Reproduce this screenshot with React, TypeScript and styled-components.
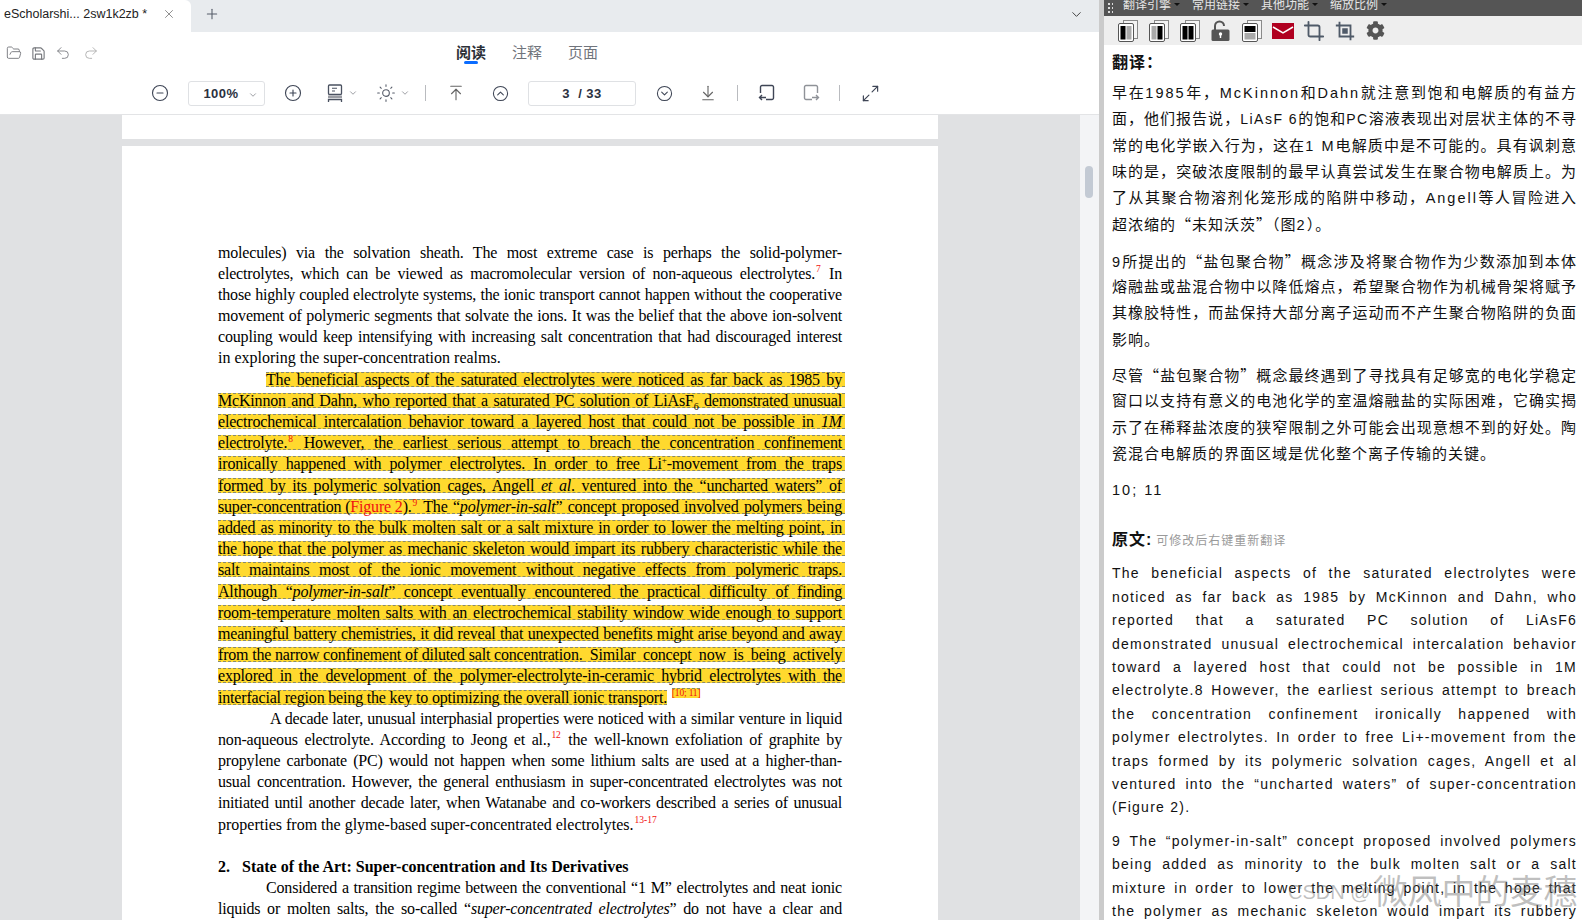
import React from 'react';
import styled, { createGlobalStyle } from 'styled-components';
import {
  ArrowDownToLine,
  ArrowUpToLine,
  ChevronDown,
  CircleChevronDown,
  CircleChevronUp,
  CircleMinus,
  CirclePlus,
  Crop,
  FolderOpen,
  Maximize2,
  Plus,
  Redo2,
  Save,
  Sun,
  Undo2,
  X,
} from 'lucide-react';
import { FaCog } from 'react-icons/fa';

const GlobalStyle = createGlobalStyle`
  html, body { margin: 0; padding: 0; height: 100%; overflow: hidden; background: #fff; }
  body { font-family: "Liberation Sans", "Noto Sans CJK SC", sans-serif; }
`;

const Shell = styled.div`
  display: flex;
  width: 1582px;
  height: 920px;
  overflow: hidden;
  position: relative;
`;

const Reader = styled.div`
  width: 1099px;
  flex: none;
  display: flex;
  flex-direction: column;
`;

const TabBar = styled.div`
  height: 32px;
  flex: none;
  display: flex;
  align-items: center;
  background: #e8ebee;
  color: #3c4350;
`;

const Tab = styled.div`
  width: 191px;
  height: 32px;
  box-sizing: border-box;
  padding: 0 15px 4px 4px;
  display: flex;
  align-items: center;
  justify-content: space-between;
  background: #fff;
  border-top-right-radius: 6px;
  font-size: 12.5px;
  color: #222;
  white-space: nowrap;
`;

const TabAdd = styled.div`
  display: flex;
  margin: -4px 0 0 13px;
  color: #555c68;
`;

const TabMenu = styled.div`
  display: flex;
  margin: -4px 15px 0 auto;
  color: #444;
`;

const ModeRow = styled.div`
  height: 38px;
  flex: none;
  box-sizing: border-box;
  display: flex;
  align-items: center;
  padding: 4px 0 0 6px;
  background: #fff;
`;

const FileTools = styled.div`
  display: flex;
  align-items: center;
  gap: 9px;
  width: 100px;
  color: #77797e;
`;

const RedoSlot = styled.div`
  display: flex;
  margin-left: 3px;
  color: #aaa;
`;

const ModeTabs = styled.div`
  display: flex;
  gap: 26px;
  margin-left: 350px;
`;

const ModeTab = styled.div<{ $active?: boolean }>`
  position: relative;
  font-size: 15px;
  line-height: 20px;
  color: ${(p) => (p.$active ? '#2c3038' : '#70747c')};
  font-weight: ${(p) => (p.$active ? 700 : 400)};

  &::after {
    content: '';
    display: ${(p) => (p.$active ? 'block' : 'none')};
    position: absolute;
    left: 8px;
    right: 8px;
    bottom: -1px;
    height: 3px;
    border-radius: 2px;
    background: #0a6cff;
  }
`;

const ToolRow = styled.div`
  height: 45px;
  flex: none;
  box-sizing: border-box;
  display: flex;
  align-items: center;
  padding: 2px 0 0 148px;
  background: #fff;
  border-bottom: 1px solid #e3e4e6;
`;

const ToolBtn = styled.div<{ $ml?: number; $w?: number; $dim?: boolean }>`
  display: flex;
  align-items: center;
  flex: none;
  width: ${(p) => p.$w ?? 24}px;
  margin-left: ${(p) => p.$ml ?? 0}px;
  justify-content: ${(p) => (p.$w ? 'flex-start' : 'center')};
  color: ${(p) => (p.$dim ? '#8f9298' : '#3f4656')};
`;

const Caret = styled(ChevronDown)`
  margin-left: 4px;
  color: #8a8d93;
`;

const ToolSep = styled.div<{ $ml: number }>`
  width: 1px;
  height: 16px;
  flex: none;
  margin-left: ${(p) => p.$ml}px;
  background: #b9bbbf;
`;

const FieldBox = styled.div<{ $w: number; $ml: number; $pr?: number }>`
  width: ${(p) => p.$w}px;
  height: 25px;
  flex: none;
  box-sizing: border-box;
  margin-left: ${(p) => p.$ml}px;
  padding-right: ${(p) => p.$pr ?? 0}px;
  display: flex;
  align-items: center;
  justify-content: center;
  position: relative;
  border: 1px solid #dfe1e4;
  border-radius: 3px;
  font-size: 13px;
  font-weight: 700;
  letter-spacing: 0.5px;
  color: #2b3140;
  white-space: pre;
`;

const FieldCaret = styled(ChevronDown)`
  position: absolute;
  right: 6px;
  top: 8px;
  color: #8a8d93;
`;

const Viewer = styled.div`
  flex: 1;
  min-height: 0;
  display: flex;
  overflow: hidden;
`;

const PageArea = styled.div`
  width: 1080px;
  flex: none;
  padding-left: 122px;
  box-sizing: border-box;
  background: #e0e1e3;
`;

const ScrollTrack = styled.div`
  flex: 1;
  padding: 51px 6px 0 5px;
  background: #f3f4f6;
`;

const ScrollThumb = styled.div`
  height: 32px;
  border-radius: 4px;
  background: #c3cad4;
`;

const PageTail = styled.div`
  width: 816px;
  height: 24px;
  margin-bottom: 7px;
  background: #fff;
`;

const PdfPage = styled.div`
  width: 816px;
  box-sizing: border-box;
  padding: 95.5px 0 0 96px;
  height: 800px;
  background: #fff;
  font-family: "Liberation Serif", "Times New Roman", serif;
  font-size: 16px;
  color: #000;
`;

const PdfLine = styled.div<{ $indent?: number; $last?: boolean; $bold?: boolean }>`
  width: 624px;
  height: 21.2px;
  line-height: 21.2px;
  box-sizing: border-box;
  padding-left: ${(p) => p.$indent ?? 0}px;
  white-space: nowrap;
  letter-spacing: ${(p) => (p.$last ? 0 : -0.18)}px;
  text-align: justify;
  text-align-last: ${(p) => (p.$last ? 'left' : 'justify')};
  font-weight: ${(p) => (p.$bold ? 700 : 400)};
`;

const MarkLine = styled.div<{ $indent?: number }>`
  width: 627px;
  height: 21.2px;
  box-sizing: border-box;
  padding-left: ${(p) => p.$indent ?? 0}px;
  display: flex;
  align-items: center;
  white-space: nowrap;
  letter-spacing: -0.18px;
`;

const Mark = styled.div<{ $fill?: boolean }>`
  flex: ${(p) => (p.$fill ? '1 1 0' : 'none')};
  min-width: 0;
  height: 15px;
  line-height: 13px;
  box-sizing: border-box;
  padding-right: ${(p) => (p.$fill ? 3 : 0)}px;
  background: #ffd92e;
  border-top: 1px dashed #8a8a6a;
  border-bottom: 1px dashed #8a8a6a;
  text-align: justify;
  text-align-last: justify;
`;

const Ref = styled.sup`
  font-size: 9.5px;
  line-height: 0;
  color: #f01010;
  margin: 0 1px;
`;

const RefMark = styled(Ref)`
  align-self: flex-start;
  height: 9px;
  line-height: 9px;
  margin-top: 2px;
  background: #ffd92e;
  border-top: 1px dashed #8a8a6a;
`;

const Plain = styled.sup`
  font-size: 9px;
  line-height: 0;
`;

const Figure = styled.span`
  color: #f01010;
`;

const Sub = styled.sub`
  font-size: 10px;
  line-height: 0;
`;

const BlankLine = styled.div`
  height: 21.2px;
`;

const Divider = styled.div`
  width: 5px;
  flex: none;
  background: #cbcbcb;
`;

const Translator = styled.div`
  flex: 1;
  min-width: 0;
  display: flex;
  flex-direction: column;
`;

const MenuBar = styled.div`
  height: 16px;
  flex: none;
  display: flex;
  background: #555;
  color: #e6e6e6;
  overflow: hidden;
`;

const Grip = styled.div`
  width: 6px;
  height: 12px;
  margin: 2px 10px 0 3px;
  flex: none;
  background-image: radial-gradient(#ddd 1px, transparent 1.2px);
  background-size: 4px 4px;
`;

const MenuItem = styled.div`
  width: 69px;
  flex: none;
  display: flex;
  align-items: flex-start;
  font-size: 12px;
  line-height: 10px;

  &::after {
    content: '';
    margin: 3px 0 0 3px;
    border: 3.5px solid transparent;
    border-top-color: #111;
    border-bottom: 0;
  }
`;

const IconBar = styled.div`
  height: 29px;
  flex: none;
  display: flex;
  align-items: center;
  padding-left: 8px;
  background: #eee;
`;

const IconSlot = styled.div`
  width: 31px;
  flex: none;
  display: flex;
  justify-content: center;
  color: #555;
`;

const CropIcon = styled(Crop)`
  color: #4f5a68;
`;

const Result = styled.div`
  padding: 5px 0 0 8px;
  width: 473px;
  box-sizing: border-box;
  color: #111;
  overflow: hidden;
`;

const Heading = styled.div<{ $top?: number }>`
  height: 26px;
  line-height: 26px;
  margin-top: ${(p) => p.$top ?? 0}px;
  font-size: 16px;
  font-weight: 700;
  letter-spacing: 1px;
  white-space: nowrap;
`;

const HeadingNote = styled.span`
  margin-left: 4px;
  font-size: 12px;
  font-weight: 400;
  letter-spacing: 1px;
  color: #9a9a9a;
`;

const Para = styled.div<{ $cn?: boolean; $top?: number }>`
  margin-top: ${(p) => p.$top ?? 10}px;
  font-size: ${(p) => (p.$cn ? 15 : 14)}px;
  letter-spacing: ${(p) => (p.$cn ? 1 : 1.25)}px;
  line-height: ${(p) => (p.$cn ? 26.3 : 23.4)}px;

  & > div {
    height: ${(p) => (p.$cn ? 26.3 : 23.4)}px;
    white-space: nowrap;
    text-align: justify;
    text-align-last: justify;
  }

  & > div:last-child {
    text-align-last: left;
  }
`;

const OpenPara = styled(Para)`
  & > div:last-child {
    text-align-last: justify;
  }
`;

// latin runs inside the chinese text sit tighter in size, wider in spacing
const Latin = styled.span<{ $tight?: boolean }>`
  font-size: ${(p) => (p.$tight ? 14 : 14.5)}px;
  letter-spacing: ${(p) => (p.$tight ? 1.5 : 2)}px;
`;

// the wide Chinese quotes and brackets come from the CJK face
const Cjk = styled.span`
  font-family: "Noto Sans CJK SC", sans-serif;
`;

const Watermark = styled.div`
  position: absolute;
  left: 1288px;
  top: 874px;
  display: flex;
  align-items: center;
  gap: 6px;
  line-height: 36px;
  white-space: nowrap;
  color: rgba(110, 110, 110, 0.44);
  pointer-events: none;
`;

const WatermarkLatin = styled.span`
  font-size: 20px;
`;

const WatermarkCjk = styled.span`
  font-size: 34px;
  margin-left: -3px;
`;

// small drawn icons for what the icon packages do not have
const PageLayoutIcon = () => (
  <svg width="18" height="18" viewBox="0 0 18 18" fill="none">
    <rect x="2.5" y="1" width="13" height="9.5" rx="1" stroke="#4a5160" strokeWidth="1.3" />
    <path d="M6 4.2h5M6 7h3" stroke="#4a5160" strokeWidth="1.1" />
    <rect x="2" y="11.5" width="14" height="2.5" fill="#9a9ca3" />
    <path d="M2.5 18v-2.5h13V18" stroke="#4a5160" strokeWidth="1.3" />
  </svg>
);

const RotateIcon = ({ flip }: { flip?: boolean }) => (
  <svg width="18" height="18" viewBox="0 0 18 18" fill="none" stroke="currentColor" strokeWidth="1.4">
    <g transform={flip ? 'translate(18 0) scale(-1 1)' : undefined}>
      <path d="M2.5 9V3a1.5 1.5 0 0 1 1.5-1.5h10A1.5 1.5 0 0 1 15.500 3v11a1.500 1.500 0 0 1-1.500 1.500H8" />
      <path d="M8 13.500H1.500M4 11l-2.500 2.500L4 16" />
    </g>
  </svg>
);

const PaneIcon = ({ left, right, stacked }: { left: string; right: string; stacked?: boolean }) => (
  <svg width="20" height="22" viewBox="0 0 20 22">
    <rect x="5.500" y="0.500" width="14" height="18" fill="#f4f4f4" stroke="#8a8a8a" />
    <rect x="0.500" y="3.500" width="15" height="18" rx="1.500" fill="#fff" stroke="#555" />
    {stacked ? (
      <>
        <rect x="2.500" y="6" width="11" height="6" fill={left} />
        <rect x="2.500" y="13" width="11" height="6.500" fill={right} />
      </>
    ) : (
      <>
        <rect x="2.500" y="6" width="5" height="13.500" fill={left} />
        <rect x="8.500" y="6" width="5" height="13.500" fill={right} />
      </>
    )}
  </svg>
);

const LockIcon = () => (
  <svg width="19" height="21" viewBox="0 0 19 21">
    <path d="M4 10V6a4.500 4.500 0 0 1 9 0" fill="none" stroke="#555" strokeWidth="2" />
    <rect x="0.500" y="9.500" width="18" height="11.500" rx="1.500" fill="#555" />
    <circle cx="9.500" cy="14" r="1.700" fill="#fff" />
    <rect x="8.800" y="14" width="1.400" height="4" fill="#fff" />
  </svg>
);

const MailIcon = () => (
  <svg width="22" height="16" viewBox="0 0 22 16">
    <rect width="22" height="16" fill="#b00020" />
    <path d="M1 4l10 6 10-6" fill="none" stroke="#fff" strokeWidth="1.500" />
  </svg>
);

const CropBoxIcon = () => (
  <svg width="22" height="22" viewBox="0 0 24 24" fill="none" stroke="#4f5a68" strokeWidth="2">
    <path d="M6 2v16h16M2 6h16v16" />
    <rect x="9" y="9" width="6" height="6" fill="#4f5a68" stroke="none" />
  </svg>
);

const App: React.FC = () => (
  <Shell>
    <GlobalStyle />
    <Reader>
      <TabBar>
        <Tab>
          eScholarshi... 2sw1k2zb *
          <X size={14} strokeWidth={1.4} color="#777" />
        </Tab>
        <TabAdd>
          <Plus size={16} strokeWidth={1.6} />
        </TabAdd>
        <TabMenu>
          <ChevronDown size={15} strokeWidth={1.6} />
        </TabMenu>
      </TabBar>
      <ModeRow>
        <FileTools>
          <FolderOpen size={16} strokeWidth={1.4} />
          <Save size={15} strokeWidth={1.8} />
          <Undo2 size={16} strokeWidth={1.3} />
          <RedoSlot>
            <Redo2 size={16} strokeWidth={1.3} />
          </RedoSlot>
        </FileTools>
        <ModeTabs>
          <ModeTab $active>阅读</ModeTab>
          <ModeTab>注释</ModeTab>
          <ModeTab>页面</ModeTab>
        </ModeTabs>
      </ModeRow>
      <ToolRow>
        <ToolBtn><CircleMinus size={18} strokeWidth={1.5} /></ToolBtn>
        <FieldBox $w={77} $ml={16} $pr={11}>
          100%
          <FieldCaret size={10} />
        </FieldBox>
        <ToolBtn $ml={16}><CirclePlus size={18} strokeWidth={1.5} /></ToolBtn>
        <ToolBtn $ml={21} $w={40}>
          <PageLayoutIcon />
          <Caret size={10} />
        </ToolBtn>
        <ToolBtn $ml={10} $w={40}>
          <Sun size={20} strokeWidth={1.3} color="#555b68" />
          <Caret size={10} />
        </ToolBtn>
        <ToolSep $ml={9} />
        <ToolBtn $ml={18} $dim><ArrowUpToLine size={18} strokeWidth={1.5} color="#666" /></ToolBtn>
        <ToolBtn $ml={20}><CircleChevronUp size={17} strokeWidth={1.5} /></ToolBtn>
        <FieldBox $w={108} $ml={16}>{'3  / 33'}</FieldBox>
        <ToolBtn $ml={16}><CircleChevronDown size={17} strokeWidth={1.5} /></ToolBtn>
        <ToolBtn $ml={20} $dim><ArrowDownToLine size={18} strokeWidth={1.5} color="#666" /></ToolBtn>
        <ToolSep $ml={17} />
        <ToolBtn $ml={17}><RotateIcon /></ToolBtn>
        <ToolBtn $ml={20} $dim><RotateIcon flip /></ToolBtn>
        <ToolSep $ml={16} />
        <ToolBtn $ml={18}><Maximize2 size={19} strokeWidth={1.5} /></ToolBtn>
      </ToolRow>
      <Viewer>
        <PageArea>
          <PageTail />
          <PdfPage>
            <PdfLine>molecules) via the solvation sheath. The most extreme case is perhaps the solid-polymer-</PdfLine>
            <PdfLine>electrolytes, which can be viewed as macromolecular version of non-aqueous electrolytes.<Ref>7</Ref> In</PdfLine>
            <PdfLine>those highly coupled electrolyte systems, the ionic transport cannot happen without the cooperative</PdfLine>
            <PdfLine>movement of polymeric segments that solvate the ions. It was the belief that the above ion-solvent</PdfLine>
            <PdfLine>coupling would keep intensifying with increasing salt concentration that had discouraged interest</PdfLine>
            <PdfLine $last>in exploring the super-concentration realms.</PdfLine>
            <MarkLine $indent={48}><Mark $fill>The beneficial aspects of the saturated electrolytes were noticed as far back as 1985 by</Mark></MarkLine>
            <MarkLine><Mark $fill>McKinnon and Dahn, who reported that a saturated PC solution of LiAsF<Sub>6</Sub> demonstrated unusual</Mark></MarkLine>
            <MarkLine><Mark $fill>electrochemical intercalation behavior toward a layered host that could not be possible in <i>1M</i></Mark></MarkLine>
            <MarkLine><Mark $fill>electrolyte.<Ref>8</Ref> However, the earliest serious attempt to breach the concentration confinement</Mark></MarkLine>
            <MarkLine><Mark $fill>ironically happened with polymer electrolytes. In order to free Li<Plain>+</Plain>-movement from the traps</Mark></MarkLine>
            <MarkLine><Mark $fill>formed by its polymeric solvation cages, Angell <i>et al</i>. ventured into the “uncharted waters” of</Mark></MarkLine>
            <MarkLine><Mark>super-concentration (<Figure>Figure 2</Figure>).</Mark><Mark $fill><Ref>9</Ref> The “<i>polymer-in-salt</i>” concept proposed involved polymers being</Mark></MarkLine>
            <MarkLine><Mark $fill>added as minority to the bulk molten salt or a salt mixture in order to lower the melting point, in</Mark></MarkLine>
            <MarkLine><Mark $fill>the hope that the polymer as mechanic skeleton would impart its rubbery characteristic while the</Mark></MarkLine>
            <MarkLine><Mark $fill>salt maintains most of the ionic movement without negative effects from polymeric traps.</Mark></MarkLine>
            <MarkLine><Mark $fill>Although “<i>polymer-in-salt</i>” concept eventually encountered the practical difficulty of finding</Mark></MarkLine>
            <MarkLine><Mark $fill>room-temperature molten salts with an electrochemical stability window wide enough to support</Mark></MarkLine>
            <MarkLine><Mark $fill>meaningful battery chemistries, it did reveal that unexpected benefits might arise beyond and away</Mark></MarkLine>
            <MarkLine><Mark>from the narrow confinement of diluted salt concentration.</Mark><Mark $fill>&nbsp;Similar concept now is being actively</Mark></MarkLine>
            <MarkLine><Mark $fill>explored in the development of the polymer-electrolyte-in-ceramic hybrid electrolytes with the</Mark></MarkLine>
            <MarkLine><Mark>interfacial region being the key to optimizing the overall ionic transport.</Mark>&nbsp;<RefMark>[10; 11]</RefMark></MarkLine>
            <PdfLine $indent={52}>A decade later, unusual interphasial properties were noticed with a similar venture in liquid</PdfLine>
            <PdfLine>non-aqueous electrolyte. According to Jeong et al.,<Ref>12</Ref> the well-known exfoliation of graphite by</PdfLine>
            <PdfLine>propylene carbonate (PC) would not happen when some lithium salts are used at a higher-than-</PdfLine>
            <PdfLine>usual concentration. However, the general enthusiasm in super-concentrated electrolytes was not</PdfLine>
            <PdfLine>initiated until another decade later, when Watanabe and co-workers described a series of unusual</PdfLine>
            <PdfLine $last>properties from the glyme-based super-concentrated electrolytes.<Ref>13-17</Ref></PdfLine>
            <BlankLine />
            <PdfLine $last $bold>2.&nbsp;&nbsp; State of the Art: Super-concentration and Its Derivatives</PdfLine>
            <PdfLine $indent={48}>Considered a transition regime between the conventional “1 M” electrolytes and neat ionic</PdfLine>
            <PdfLine>liquids or molten salts, the so-called “<i>super-concentrated electrolytes</i>” do not have a clear and</PdfLine>
          </PdfPage>
        </PageArea>
        <ScrollTrack>
          <ScrollThumb />
        </ScrollTrack>
      </Viewer>
    </Reader>
    <Divider />
    <Translator>
      <MenuBar>
        <Grip />
        <MenuItem>翻译引擎</MenuItem>
        <MenuItem>常用链接</MenuItem>
        <MenuItem>其他功能</MenuItem>
        <MenuItem>缩放比例</MenuItem>
      </MenuBar>
      <IconBar>
        <IconSlot><PaneIcon left="#000" right="#aaa" /></IconSlot>
        <IconSlot><PaneIcon left="#aaa" right="#000" /></IconSlot>
        <IconSlot><PaneIcon left="#000" right="#000" /></IconSlot>
        <IconSlot><LockIcon /></IconSlot>
        <IconSlot><PaneIcon left="#000" right="#aaa" stacked /></IconSlot>
        <IconSlot><MailIcon /></IconSlot>
        <IconSlot><CropIcon size={22} strokeWidth={2} /></IconSlot>
        <IconSlot><CropBoxIcon /></IconSlot>
        <IconSlot><FaCog size={19} /></IconSlot>
      </IconBar>
      <Result>
        <Heading>翻译：</Heading>
        <Para $cn $top={4}>
          <div>早在<Latin>1985</Latin>年，<Latin>McKinnon</Latin>和<Latin>Dahn</Latin>就注意到饱和电解质的有益方</div>
          <div>面，他们报告说，<Latin $tight>LiAsF 6</Latin>的饱和<Latin $tight>PC</Latin>溶液表现出对层状主体的不寻</div>
          <div>常的电化学嵌入行为，这在<Latin>1 M</Latin>电解质中是不可能的。具有讽刺意</div>
          <div>味的是，突破浓度限制的最早认真尝试发生在聚合物电解质上。为</div>
          <div>了从其聚合物溶剂化笼形成的陷阱中移动，<Latin>Angell</Latin>等人冒险进入</div>
          <div>超浓缩的<Cjk>“</Cjk>未知沃茨<Cjk>”</Cjk>（图<Latin>2</Latin>）。</div>
        </Para>
        <Para $cn>
          <div><Latin>9</Latin>所提出的<Cjk>“</Cjk>盐包聚合物<Cjk>”</Cjk>概念涉及将聚合物作为少数添加到本体</div>
          <div>熔融盐或盐混合物中以降低熔点，希望聚合物作为机械骨架将赋予</div>
          <div>其橡胶特性，而盐保持大部分离子运动而不产生聚合物陷阱的负面</div>
          <div>影响。</div>
        </Para>
        <Para $cn $top={9}>
          <div>尽管<Cjk>“</Cjk>盐包聚合物<Cjk>”</Cjk>概念最终遇到了寻找具有足够宽的电化学稳定</div>
          <div>窗口以支持有意义的电池化学的室温熔融盐的实际困难，它确实揭</div>
          <div>示了在稀释盐浓度的狭窄限制之外可能会出现意想不到的好处。陶</div>
          <div>瓷混合电解质的界面区域是优化整个离子传输的关键。</div>
        </Para>
        <Para $cn>
          <div><Latin>10; 11</Latin></div>
        </Para>
        <Heading $top={24}>原文:<HeadingNote>可修改后右键重新翻译</HeadingNote></Heading>
        <Para $top={9}>
          <div>The beneficial aspects of the saturated electrolytes were</div>
          <div>noticed as far back as 1985 by McKinnon and Dahn, who</div>
          <div>reported that a saturated PC solution of LiAsF6</div>
          <div>demonstrated unusual electrochemical intercalation behavior</div>
          <div>toward a layered host that could not be possible in 1M</div>
          <div>electrolyte.8 However, the earliest serious attempt to breach</div>
          <div>the concentration confinement ironically happened with</div>
          <div>polymer electrolytes. In order to free Li+-movement from the</div>
          <div>traps formed by its polymeric solvation cages, Angell et al</div>
          <div>ventured into the “uncharted waters” of super-concentration</div>
          <div>(Figure 2).</div>
        </Para>
        <OpenPara>
          <div>9 The “polymer-in-salt” concept proposed involved polymers</div>
          <div>being added as minority to the bulk molten salt or a salt</div>
          <div>mixture in order to lower the melting point, in the hope that</div>
          <div>the polymer as mechanic skeleton would impart its rubbery</div>
        </OpenPara>
      </Result>
    </Translator>
    <Watermark>
      <WatermarkLatin>CSDN @</WatermarkLatin>
      <WatermarkCjk>微风中的麦穗</WatermarkCjk>
    </Watermark>
  </Shell>
);

export default App;
